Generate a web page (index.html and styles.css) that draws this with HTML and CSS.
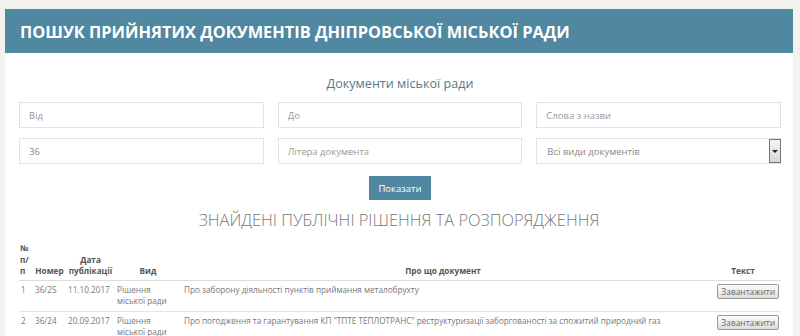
FILE: index.html
```html
<!DOCTYPE html>
<html lang="uk">
<head>
  <meta charset="UTF-8">
  <meta name="viewport" content="width=device-width, initial-scale=1.0">
  <title>Пошук прийнятих документів</title>
  <link rel="stylesheet" href="styles.css">
</head>
<body>
  <div class="container">
    <header class="page-header">
      <h1>ПОШУК ПРИЙНЯТИХ ДОКУМЕНТІВ ДНІПРОВСЬКОЇ МІСЬКОЇ РАДИ</h1>
    </header>

    <form class="search-form" onsubmit="return false;">
      <h2 class="form-title">Документи міської ради</h2>
      <div class="fields">
        <input type="text" placeholder="Від">
        <input type="text" placeholder="До">
        <input type="text" placeholder="Слова з назви">
        <input type="text" value="36">
        <input type="text" placeholder="Літера документа">
        <div class="select-box">
          <select>
            <option>Всі види документів</option>
          </select>
          <span class="select-arrow"></span>
        </div>
      </div>
      <div class="actions">
        <button type="submit" class="btn">Показати</button>
      </div>
    </form>

    <h2 class="results-title">ЗНАЙДЕНІ ПУБЛІЧНІ РІШЕННЯ ТА РОЗПОРЯДЖЕННЯ</h2>

    <table class="results">
      <colgroup>
        <col class="c-num">
        <col class="c-code">
        <col class="c-date">
        <col class="c-kind">
        <col>
        <col class="c-file">
      </colgroup>
      <thead>
        <tr>
          <th>№ п/п</th>
          <th>Номер</th>
          <th>Дата публікації</th>
          <th>Вид</th>
          <th>Про що документ</th>
          <th>Текст</th>
        </tr>
      </thead>
      <tbody>
        <tr>
          <td>1</td>
          <td>36/25</td>
          <td>11.10.2017</td>
          <td>Рішення міської ради</td>
          <td class="about">Про заборону діяльності пунктів приймання металобрухту</td>
          <td class="file"><button class="dl">Завантажити</button></td>
        </tr>
        <tr>
          <td>2</td>
          <td>36/24</td>
          <td>20.09.2017</td>
          <td>Рішення міської ради</td>
          <td class="about">Про погодження та гарантування КП "ТПТЕ ТЕПЛОТРАНС" реструктуризації заборгованості за спожитий природний газ</td>
          <td class="file"><button class="dl">Завантажити</button></td>
        </tr>
      </tbody>
    </table>
  </div>
</body>
</html>
```

FILE: styles.css
```css
/* Basic Reset */
* { margin: 0; padding: 0; box-sizing: border-box; }
body {
  font-family: "Open Sans", Arial, sans-serif;
  background: #f2f2ef;
  color: #777;
  padding: 9px 7px 0 5px;
}
.container {
  background: #fff;
  width: 788px;
  min-height: 340px;
}
.page-header {
  background: #4f88a0;
  height: 44px;
  display: flex;
  align-items: center;
  padding-left: 15px;
}
.page-header h1 {
  color: #fff;
  font-size: 16.4px;
  font-weight: 700;
}
.search-form {
  padding: 0 12px 0 14px;
}
.form-title {
  text-align: center;
  color: #4f7a90;
  font-size: 12.6px;
  font-weight: 400;
  margin-top: 22px;
  line-height: 18px;
}
.fields {
  display: grid;
  grid-template-columns: repeat(3, 1fr);
  column-gap: 14px;
  row-gap: 10px;
  margin-top: 9px;
}
.fields input, .select-box {
  height: 26px;
  border: 1px solid #e2e2e2;
  background: #fff;
  font-family: "Open Sans", Arial, sans-serif;
  font-size: 9.5px;
  color: #888;
}
.fields input {
  padding-left: 9px;
}
.fields input::placeholder {
  color: #999;
}
.select-box {
  display: flex;
  align-items: center;
}
.select-box select {
  flex: 1;
  appearance: none;
  -webkit-appearance: none;
  border: none;
  background: transparent;
  height: 100%;
  padding-left: 10px;
  font-family: "Open Sans", Arial, sans-serif;
  font-size: 9.5px;
  color: #888;
  outline: none;
}
.select-arrow {
  width: 12px;
  height: 24px;
  border: 1px solid #777;
  background: linear-gradient(#f4f4f4, #d8d8d8);
  display: flex;
  align-items: center;
  justify-content: center;
  margin-right: -1px;
}
.select-arrow::after {
  content: "";
  border-left: 3px solid transparent;
  border-right: 3px solid transparent;
  border-top: 3px solid #222;
}
.actions {
  display: flex;
  justify-content: center;
  margin-top: 12px;
}
.btn {
  width: 62px;
  height: 24px;
  background: #4f88a0;
  color: #fff;
  border: none;
  font-family: "Open Sans", Arial, sans-serif;
  font-size: 9.5px;
  cursor: pointer;
}
.results-title {
  text-align: center;
  font-size: 16.4px;
  font-weight: 300;
  color: #777;
  margin-top: 8px;
  line-height: 24px;
}
.results {
  margin: 10px 12px 0 14px;
  width: 762px;
  table-layout: fixed;
  border-collapse: collapse;
  font-size: 8.2px;
  line-height: 11px;
}
.c-num { width: 14px; }
.c-code { width: 33px; }
.c-date { width: 49px; }
.c-kind { width: 66px; }
.c-file { width: 76px; }
.results th {
  font-weight: 700;
  color: #555;
  text-align: center;
  vertical-align: bottom;
  padding: 0 2px 3px;
  border-bottom: 1px solid #ddd;
  line-height: 11.5px;
}
.results th:first-child { padding: 0 1px 3px 1px; text-align: left; }
.results td {
  vertical-align: top;
  padding: 3px 2px 5px;
  border-bottom: 1px solid #e4e4e4;
}
.results td.about { padding-left: 3px; }
.results td.file { text-align: right; padding-right: 2px; padding-top: 3px; }
.dl {
  font-family: "Open Sans", Arial, sans-serif;
  font-size: 8.4px;
  color: #666;
  padding: 0 3px;
  height: 15px;
  background: linear-gradient(#fbfbfb, #dedede);
  border: 1px solid #999;
  border-radius: 2px;
}
```
